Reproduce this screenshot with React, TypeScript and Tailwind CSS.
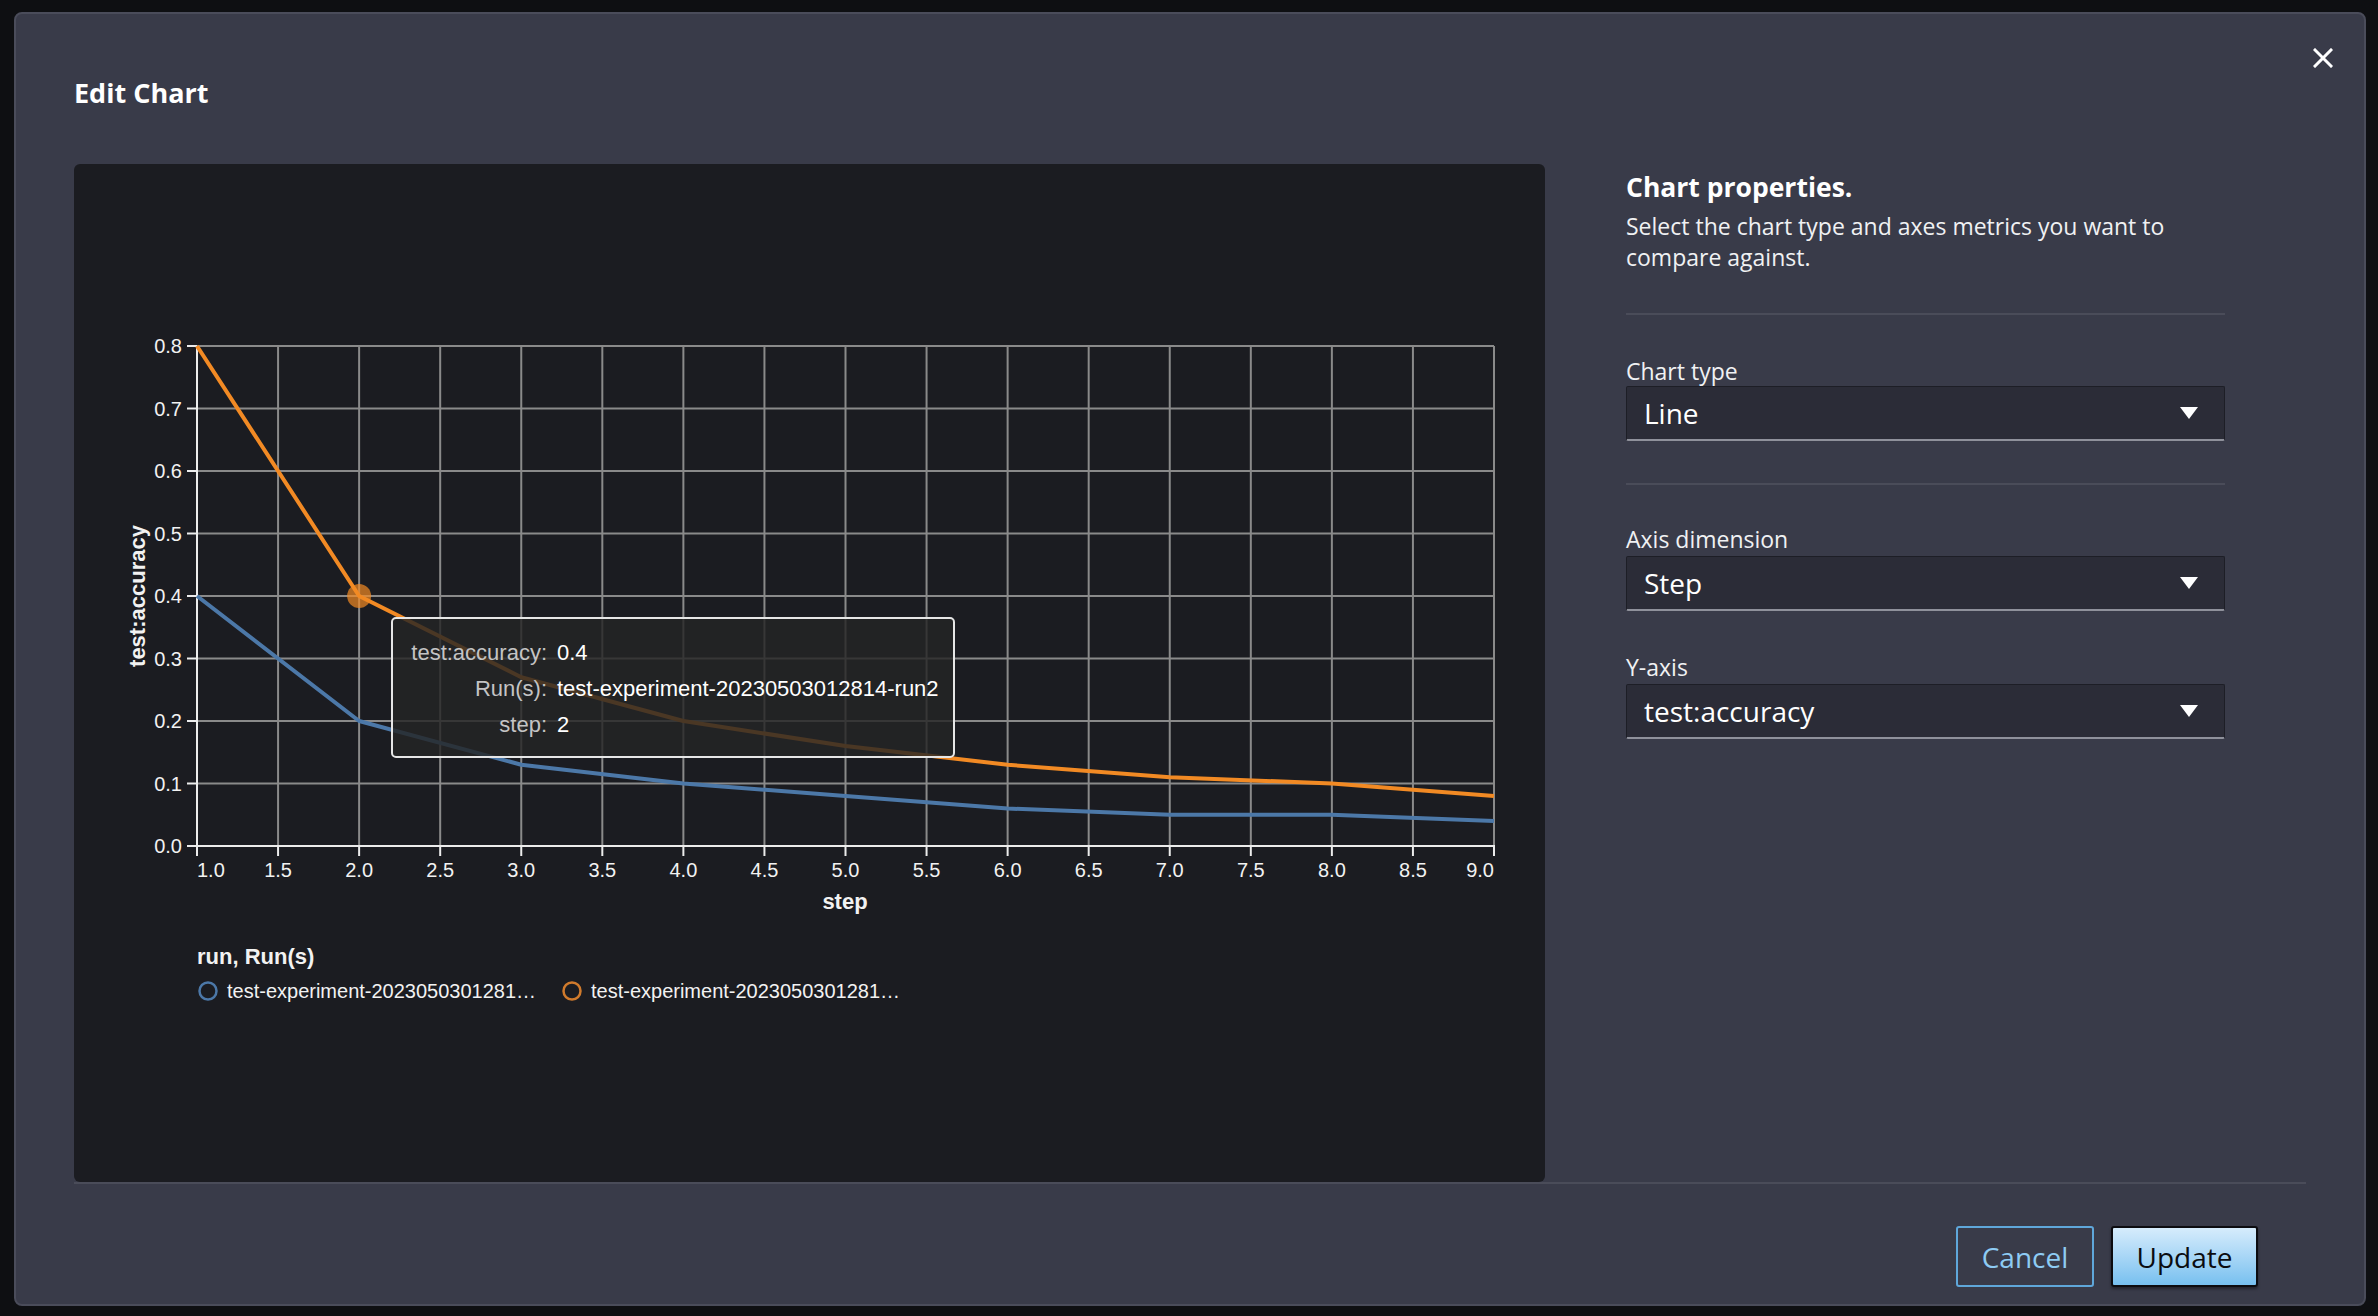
import React from "react"

// chart geometry, in px inside the chart panel
const L = 123
const R = 1420
const T = 182
const B = 682

const xs = (v: number) => L + ((v - 1) / 8) * (R - L)
const ys = (v: number) => B - (v / 0.8) * (B - T)

const steps = [1, 2, 3, 4, 5, 6, 7, 8, 9]
const run1 = [0.4, 0.2, 0.13, 0.1, 0.08, 0.06, 0.05, 0.05, 0.04]
const run2 = [0.8, 0.4, 0.27, 0.2, 0.16, 0.13, 0.11, 0.1, 0.08]

const linePath = (vals: number[]) =>
  vals.map((v, i) => `${i === 0 ? "M" : "L"}${xs(steps[i])},${ys(v)}`).join("")

const xTicks = Array.from({ length: 17 }, (_, i) => 1 + i * 0.5)
const yTicks = Array.from({ length: 9 }, (_, i) => i / 10)

function LineChart() {
  const font = "'Liberation Sans', Arial, sans-serif"
  return (
    <svg width={1471} height={1017} className="block">
      {/* grid */}
      {xTicks.map((v) => (
        <line key={"gx" + v} x1={xs(v)} x2={xs(v)} y1={T} y2={B} stroke="#8a8a8a" strokeWidth={2} />
      ))}
      {yTicks.map((v) => (
        <line key={"gy" + v} x1={L} x2={R} y1={ys(v)} y2={ys(v)} stroke="#8a8a8a" strokeWidth={2} />
      ))}

      {/* axes */}
      <line x1={L} x2={L} y1={T} y2={B + 1} stroke="#ececec" strokeWidth={2} />
      <line x1={L} x2={R + 1} y1={B} y2={B} stroke="#ececec" strokeWidth={2} />
      {yTicks.map((v) => (
        <line key={"ty" + v} x1={L - 10} x2={L} y1={ys(v)} y2={ys(v)} stroke="#ececec" strokeWidth={2} />
      ))}
      {xTicks.map((v) => (
        <line key={"tx" + v} x1={xs(v)} x2={xs(v)} y1={B} y2={B + 10} stroke="#ececec" strokeWidth={2} />
      ))}

      <g fontFamily={font} fontSize={20} fill="#f2f2f2">
        {yTicks.map((v) => (
          <text key={"ly" + v} x={L - 15} y={ys(v)} textAnchor="end" dominantBaseline="central">
            {v.toFixed(1)}
          </text>
        ))}
        {xTicks.map((v, i) => (
          <text
            key={"lx" + v}
            x={xs(v)}
            y={706}
            textAnchor={i === 0 ? "start" : i === xTicks.length - 1 ? "end" : "middle"}
            dominantBaseline="central"
          >
            {v.toFixed(1)}
          </text>
        ))}
      </g>

      <g fontFamily={font} fontSize={22} fontWeight={700} fill="#f2f2f2">
        <text x={771} y={737} textAnchor="middle" dominantBaseline="central">
          step
        </text>
        <text
          x={63}
          y={432}
          textAnchor="middle"
          dominantBaseline="central"
          transform="rotate(-90 63 432)"
        >
          test:accuracy
        </text>
      </g>

      {/* series */}
      <path d={linePath(run1)} fill="none" stroke="#4c78a8" strokeWidth={4} strokeLinejoin="round" />
      <path d={linePath(run2)} fill="none" stroke="#f28a24" strokeWidth={4} strokeLinejoin="round" />
      <circle cx={xs(2)} cy={ys(0.4)} r={12} fill="#f28a24" fillOpacity={0.7} />

      {/* legend */}
      <g fontFamily={font} fill="#f2f2f2">
        <text x={123} y={792} fontSize={22} fontWeight={700} dominantBaseline="central">
          run, Run(s)
        </text>
        <circle cx={134} cy={827} r={8.5} fill="none" stroke="#4c78a8" strokeWidth={2.5} />
        <text x={153} y={827} fontSize={20} dominantBaseline="central">
          test-experiment-2023050301281…
        </text>
        <circle cx={498} cy={827} r={8.5} fill="none" stroke="#d07a2c" strokeWidth={2.5} />
        <text x={517} y={827} fontSize={20} dominantBaseline="central">
          test-experiment-2023050301281…
        </text>
      </g>
    </svg>
  )
}

function Tooltip() {
  const rows = [
    ["test:accuracy:", "0.4"],
    ["Run(s):", "test-experiment-20230503012814-run2"],
    ["step:", "2"],
  ]
  return (
    <div className="absolute left-[317px] top-[453px] w-[564px] h-[141px] rounded-[5px] border-2 border-[#e6e6e6] bg-[rgba(36,36,36,0.82)] pt-[15px] pl-[16px] font-['Liberation_Sans',Arial,sans-serif] text-[22px]">
      {rows.map(([k, v]) => (
        <div key={k} className="flex h-[36px] items-center">
          <span className="w-[138px] text-right text-[#c4c4c4]">{k}</span>
          <span className="ml-[10px] text-white">{v}</span>
        </div>
      ))}
    </div>
  )
}

function Select({ value }: { value: string }) {
  return (
    <div className="flex h-[55px] w-[599px] items-center justify-between rounded-[2px] border border-b-2 border-[#1d1e26] border-b-[#8f919b] bg-[#2b2c37] pl-[17px] pr-[26px]">
      <span className="text-[28px] text-white">{value}</span>
      <svg width="18" height="12" viewBox="0 0 18 12">
        <path d="M0 0H18L9 12Z" fill="#ffffff" />
      </svg>
    </div>
  )
}

export default function App() {
  return (
    <div className="h-[1316px] w-[2378px] overflow-hidden bg-[#0e0f12] pl-[14px] pt-[12px] font-['Open_Sans',sans-serif]">
      <div className="relative flex h-[1294px] w-[2352px] flex-col rounded-[8px] border-2 border-[#4a4c5a] bg-[#393b49]">
        {/* close */}
        <button className="absolute right-[31px] top-[34px] flex h-[20px] w-[20px] items-center justify-center">
          <svg width="20" height="20" viewBox="0 0 20 20">
            <path d="M2 2L18 18M18 2L2 18" stroke="#ffffff" strokeWidth="3" strokeLinecap="square" />
          </svg>
        </button>

        {/* header */}
        <div className="h-[150px] shrink-0 px-[58px] pt-[61px]">
          <h2 className="text-[27px] font-bold leading-[36px] text-white">Edit Chart</h2>
        </div>

        {/* body */}
        <div className="mx-[58px] flex h-[1020px] shrink-0 border-b-2 border-[#4a4c59]">
          <div className="relative h-[1018px] w-[1471px] shrink-0 rounded-[6px] bg-[#1b1c21]">
            <LineChart />
            <Tooltip />
          </div>

          <div className="ml-[81px] w-[599px] pt-[5px] text-white">
            <h3 className="text-[26.5px] font-bold leading-[36px]">Chart properties.</h3>
            <p className="mt-[6px] text-[23px] leading-[31px] text-[#f0f1f3]">
              Select the chart type and axes metrics you want to compare against.
            </p>

            <div className="mt-[40px] h-[2px] bg-[#4a4c59]" />

            <div className="mt-[41px] text-[23px] leading-[30px] text-[#f0f1f3]">Chart type</div>
            <Select value="Line" />

            <div className="mt-[42px] h-[2px] bg-[#4a4c59]" />

            <div className="mt-[39px] text-[23px] leading-[30px] text-[#f0f1f3]">Axis dimension</div>
            <div className="mt-[2px]">
              <Select value="Step" />
            </div>

            <div className="mt-[41px] text-[23px] leading-[30px] text-[#f0f1f3]">Y-axis</div>
            <div className="mt-[2px]">
              <Select value="test:accuracy" />
            </div>
          </div>
        </div>

        {/* footer */}
        <div className="flex justify-end gap-[17px] pr-[106px] pt-[42px]">
          <button className="h-[61px] w-[138px] rounded-[3px] border-2 border-[#5fa7da] text-[28px] text-[#8ecbf3]">
            Cancel
          </button>
          <button className="h-[61px] w-[147px] rounded-[3px] border-2 border-[#0c0c10] bg-gradient-to-b from-[#d6ecfc] to-[#77c0ef] text-[28px] text-[#0b0c10] shadow-[0_2px_3px_rgba(0,0,0,0.4)]">
            Update
          </button>
        </div>
      </div>
    </div>
  )
}
